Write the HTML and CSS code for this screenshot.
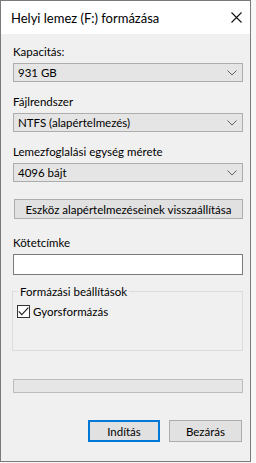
FILE: index.html
```html
<!DOCTYPE html>
<html lang="hu">
<head>
    <meta charset="UTF-8">
    <title>Helyi lemez (F:) formázása</title>
    <link rel="stylesheet" href="styles.css">
</head>
<body>
    <div class="window">
        <div class="titlebar">
            <span class="title">Helyi lemez (F:) formázása</span>
            <svg class="close" width="11" height="11" viewBox="0 0 11 11">
                <path d="M0.5 0.5 L10.5 10.5 M10.5 0.5 L0.5 10.5" stroke="#111" stroke-width="1.1" fill="none"/>
            </svg>
        </div>
        <div class="content">
            <div class="label first">Kapacitás:</div>
            <div class="combo"><span>931 GB</span><svg class="chev" width="10" height="6" viewBox="0 0 10 6"><path d="M0.5 0.5 L5 5 L9.5 0.5" stroke="#606060" fill="none"/></svg></div>

            <div class="label">Fájlrendszer</div>
            <div class="combo"><span>NTFS (alapértelmezés)</span><svg class="chev" width="10" height="6" viewBox="0 0 10 6"><path d="M0.5 0.5 L5 5 L9.5 0.5" stroke="#606060" fill="none"/></svg></div>

            <div class="label">Lemezfoglalási egység mérete</div>
            <div class="combo"><span>4096 bájt</span><svg class="chev" width="10" height="6" viewBox="0 0 10 6"><path d="M0.5 0.5 L5 5 L9.5 0.5" stroke="#606060" fill="none"/></svg></div>

            <button class="btn wide">Eszköz alapértelmezéseinek visszaállítása</button>

            <div class="label volume">Kötetcímke</div>
            <div class="textbox"></div>

            <fieldset class="group">
                <legend>Formázási beállítások</legend>
                <label class="check">
                    <span class="box"><svg width="11" height="9" viewBox="0 0 11 9"><path d="M0.7 4.3 L3.8 7.6 L10.3 0.7" stroke="#222" stroke-width="1.2" fill="none"/></svg></span>
                    Gyorsformázás
                </label>
            </fieldset>

            <div class="progress"></div>

            <div class="actions">
                <button class="btn default">Indítás</button>
                <button class="btn">Bezárás</button>
            </div>
        </div>
    </div>
</body>
</html>
```

FILE: styles.css
```css
body {
    margin: 0;
    background: #f7f7f7;
    font-family: Lato, "Noto Sans", Arial, sans-serif;
    font-size: 11.5px;
    color: #000;
}

.window {
    width: 249px;
    height: 460px;
    border: 1px solid #7a7a7a;
    background: #f0f0f0;
    display: flex;
    flex-direction: column;
}

.titlebar {
    height: 33px;
    flex: none;
    background: #fff;
    display: flex;
    align-items: center;
    justify-content: space-between;
    padding: 0 7px 0 10px;
}

.title {
    font-size: 13px;
    margin-top: 1px;
}

.close {
    margin-right: 1px;
}

.content {
    padding: 0 7px 0 12px;
    display: flex;
    flex-direction: column;
}

.label {
    line-height: 15px;
    margin-top: 12px;
    margin-bottom: 4px;
    white-space: nowrap;
}

.label.first {
    margin-top: 10px;
}

.label.volume {
    margin-top: 16px;
}

.combo {
    height: 17px;
    border: 1px solid #adadad;
    background: #e5e5e5;
    display: flex;
    align-items: center;
    justify-content: space-between;
    padding: 0 5px 0 4px;
}

.chev {
    margin-top: 1px;
}

.btn {
    font-family: inherit;
    font-size: 11.5px;
    color: #000;
    background: #e1e1e1;
    border: 1px solid #adadad;
    height: 21px;
    padding: 0;
    white-space: nowrap;
}

.btn.wide {
    margin-top: 17px;
    margin-left: 1px;
    height: 20px;
}

.textbox {
    height: 19px;
    background: #fff;
    border: 1px solid #7a7a7a;
}

.group {
    margin: 9px 0 0 -1px;
    padding: 0 0 0 4px;
    height: 65px;
    border: 1px solid #dcdcdc;
}

.group legend {
    padding: 0 2px;
    margin-left: 1px;
    line-height: 15px;
}

.check {
    display: flex;
    align-items: center;
    gap: 3px;
    margin-top: 6px;
}

.box {
    width: 11px;
    height: 11px;
    border: 1px solid #333;
    background: #fff;
    display: flex;
    align-items: center;
    justify-content: center;
}

.progress {
    margin-top: 28px;
    height: 12px;
    background: #e6e6e6;
    border: 1px solid #bcbcbc;
}

.actions {
    display: flex;
    justify-content: flex-end;
    gap: 9px;
    margin-top: 27px;
    padding-right: 1px;
}

.actions .btn {
    width: 73px;
    height: 22px;
}

.btn.default {
    border: 2px solid #0078d7;
    width: 72px;
}
```
